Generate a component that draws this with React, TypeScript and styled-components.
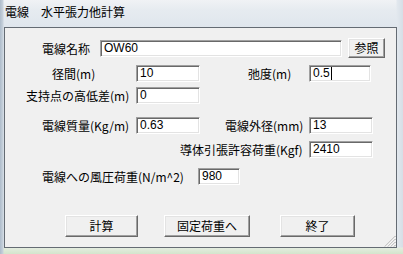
import React from "react";
import styled, { createGlobalStyle } from "styled-components";

const GlobalStyle = createGlobalStyle`
  html, body { margin: 0; padding: 0; background: #e3e9ef; }
  * { box-sizing: border-box; }
`;

const FONT = `"Noto Sans CJK JP", "Noto Sans", sans-serif`;
const NUMFONT = `"Liberation Sans", "Noto Sans CJK JP", sans-serif`;

const Window = styled.div`
  width: 403px;
  height: 254px;
  display: flex;
  flex-direction: column;
  padding: 0 6px 6px 4px;
  font-family: ${FONT};
  font-size: 12px;
  color: #000;
  background:
    linear-gradient(90deg, #aebccb 0px, #c8d2dc 3px, rgba(0,0,0,0) 4px),
    linear-gradient(0deg, #d3e5cc 0px, #e4ecdf 6px, rgba(0,0,0,0) 7px),
    linear-gradient(270deg, #d6dee6 0px, #e2e8ee 6px, rgba(0,0,0,0) 7px),
    linear-gradient(180deg, #f0f2f5 0px, #e6ebf0 10px, #dfe6ed 27px, #dde4eb 100%);
`;

const TitleBar = styled.div`
  height: 27px;
  display: flex;
  align-items: center;
  padding: 0 0 3px 1px;
  white-space: pre;
  font-size: 12px;
  line-height: 14px;
`;

const Client = styled.div`
  flex: 1;
  position: relative;
  background: #f0f0f0;
  border: 1px solid #646b73;
  display: flex;
  flex-direction: column;
  padding-top: 10px;
`;

const Row = styled.div<{ $mt?: number; $h?: number; $pl?: number }>`
  display: flex;
  align-items: center;
  height: ${(p) => p.$h ?? 17}px;
  margin-top: ${(p) => p.$mt ?? 0}px;
  padding-left: ${(p) => p.$pl ?? 0}px;
`;

const Label = styled.div<{ $w: number; $pl: number }>`
  width: ${(p) => p.$w}px;
  padding-left: ${(p) => p.$pl}px;
  flex: none;
  white-space: nowrap;
  font-size: 12px;
  line-height: 17px;
`;

const Field = styled.div<{ $w: number }>`
  width: ${(p) => p.$w}px;
  height: 17px;
  flex: none;
  display: flex;
  align-items: center;
  padding-left: 3px;
  background: #fff;
  border: 1px solid;
  border-color: #a0a0a0 #ffffff #ffffff #a0a0a0;
  box-shadow: inset 1px 1px 0 #696969, inset -1px -1px 0 #e3e3e3;
  font-family: ${NUMFONT};
  font-size: 12px;
  line-height: 13px;
`;

const Caret = styled.span`
  display: inline-block;
  width: 1px;
  height: 13px;
  background: #000;
  margin-left: 1px;
`;

const Button = styled.div<{ $w: number; $h: number; $ml?: number }>`
  width: ${(p) => p.$w}px;
  height: ${(p) => p.$h}px;
  margin-left: ${(p) => p.$ml ?? 0}px;
  flex: none;
  display: flex;
  align-items: center;
  justify-content: center;
  background: #f0f0f0;
  border: 1px solid;
  border-color: #ffffff #696969 #696969 #ffffff;
  box-shadow: inset -1px -1px 0 #a0a0a0, inset 1px 1px 0 #e3e3e3;
  font-size: 12px;
  line-height: 14px;
`;

const Grip = styled.svg`
  position: absolute;
  right: 0;
  bottom: 0;
`;

export default function App() {
  return (
    <>
      <GlobalStyle />
      <Window>
        <TitleBar>{"電線　水平張力他計算"}</TitleBar>
        <Client>
          <Row $h={20}>
            <Label $w={95} $pl={37}>電線名称</Label>
            <Field $w={242}>OW60</Field>
            <Button $w={37} $h={20} $ml={6}>参照</Button>
          </Row>
          <Row $mt={7}>
            <Label $w={131} $pl={47}>径間(m)</Label>
            <Field $w={64}>10</Field>
            <Label $w={109} $pl={48}>弛度(m)</Label>
            <Field $w={62}>
              0.5
              <Caret />
            </Field>
          </Row>
          <Row $mt={5}>
            <Label $w={131} $pl={21}>支持点の高低差(m)</Label>
            <Field $w={64}>0</Field>
          </Row>
          <Row $mt={13}>
            <Label $w={131} $pl={37}>電線質量(Kg/m)</Label>
            <Field $w={64}>0.63</Field>
            <Label $w={109} $pl={25}>電線外径(mm)</Label>
            <Field $w={64}>13</Field>
          </Row>
          <Row $mt={7}>
            <Label $w={304} $pl={175}>導体引張許容荷重(Kgf)</Label>
            <Field $w={64}>2410</Field>
          </Row>
          <Row $mt={10}>
            <Label $w={193} $pl={37}>電線への風圧荷重(N/m^2)</Label>
            <Field $w={42}>980</Field>
          </Row>
          <Row $mt={30} $h={22} $pl={60}>
            <Button $w={73} $h={22}>計算</Button>
            <Button $w={86} $h={22} $ml={26}>固定荷重へ</Button>
            <Button $w={75} $h={22} $ml={30}>終了</Button>
          </Row>
          <Grip width="13" height="13" viewBox="0 0 13 13">
            <g strokeWidth="1">
              <line x1="12.5" y1="2" x2="2" y2="12.5" stroke="#a0a0a0" />
              <line x1="12.5" y1="3" x2="3" y2="12.5" stroke="#ffffff" />
              <line x1="12.5" y1="5" x2="5" y2="12.5" stroke="#a0a0a0" />
              <line x1="12.5" y1="6" x2="6" y2="12.5" stroke="#ffffff" />
              <line x1="12.5" y1="8" x2="8" y2="12.5" stroke="#a0a0a0" />
              <line x1="12.5" y1="9" x2="9" y2="12.5" stroke="#ffffff" />
              <line x1="12.5" y1="11" x2="11" y2="12.5" stroke="#a0a0a0" />
            </g>
          </Grip>
        </Client>
      </Window>
    </>
  );
}
